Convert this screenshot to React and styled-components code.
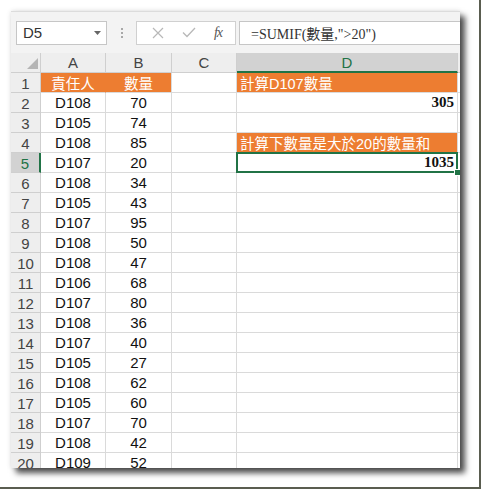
import React from 'react';
import styled, { createGlobalStyle } from 'styled-components';

const GlobalStyle = createGlobalStyle`
	body {
		margin: 0;
		background: #ffffff;
		font-family: 'Liberation Sans', 'Noto Sans CJK TC', sans-serif;
	}
`;

const green = '#217346';
const orange = '#ed7d31';
const grid = '#dadada';

const Frame = styled.div`
	box-sizing: border-box;
	width: 481px;
	height: 489px;
	padding: 11px 0 0 11px;
	border-right: 2px solid #5a5d50;
	border-bottom: 2px solid #5a5d50;
	background: #ffffff;
`;

const Window = styled.div`
	width: 449px;
	height: 457px;
	overflow: hidden;
	background: #ffffff;
	box-shadow: 5px 5px 6px rgba(0, 0, 0, 0.7), 0 0 5px rgba(0, 0, 0, 0.12);
`;

const FormulaBar = styled.div`
	box-sizing: border-box;
	height: 42px;
	display: flex;
	align-items: center;
	padding-left: 5px;
	background: #f3f3f3;
	border-top: 1px solid #dcdcdc;
`;

const NameBox = styled.div`
	box-sizing: border-box;
	width: 91px;
	height: 24px;
	display: flex;
	align-items: center;
	justify-content: space-between;
	padding: 0 5px 0 6px;
	background: #ffffff;
	border: 1px solid #c6c6c6;
	font-size: 15px;
	color: #333333;
`;

const Dots = styled.div`
	width: 29px;
	display: flex;
	flex-direction: column;
	align-items: center;
	gap: 2px;

	span {
		width: 2px;
		height: 2px;
		background: #a8a8a8;
	}
`;

const ButtonBox = styled.div`
	box-sizing: border-box;
	width: 100px;
	height: 24px;
	display: flex;
	align-items: center;
	justify-content: space-around;
	padding: 0 4px 0 6px;
	background: #ffffff;
	border: 1px solid #d0d0d0;
`;

const Fx = styled.span`
	font-family: 'Liberation Serif', serif;
	font-style: italic;
	font-size: 14px;
	color: #555555;
	letter-spacing: -1px;
`;

const FormulaInput = styled.div`
	box-sizing: border-box;
	flex: 1;
	height: 24px;
	margin-left: 3px;
	margin-right: -2px;
	display: flex;
	align-items: center;
	padding-left: 11px;
	background: #ffffff;
	border: 1px solid #c6c6c6;
	font-family: 'Liberation Serif', 'Noto Sans CJK TC', serif;
	font-size: 14px;
	color: #333333;
`;

const Sheet = styled.div`
	display: grid;
	grid-template-columns: 30px 65px 66px 65px 221px 1fr;
	grid-auto-rows: 20px;
`;

const Head = styled.div`
	box-sizing: border-box;
	display: flex;
	align-items: center;
	justify-content: center;
	background: ${(p) => (p.$active ? '#d2d2d2' : '#eeeeee')};
	color: ${(p) => (p.$active ? green : '#444444')};
	font-size: 15px;
	border-right: ${(p) => (p.$active && p.$row ? `2px solid ${green}` : '1px solid #cfcfcf')};
	border-bottom: ${(p) => (p.$active && !p.$row ? `2px solid ${green}` : '1px solid #cfcfcf')};
	padding-top: ${(p) => (p.$row ? '2px' : '0')};
`;

const Corner = styled(Head)`
	align-items: flex-end;
	justify-content: flex-end;
	padding: 0 2px 3px 0;
`;

const Cell = styled.div`
	box-sizing: border-box;
	position: relative;
	display: flex;
	align-items: center;
	justify-content: ${(p) => p.$align || 'center'};
	padding: 0 3px;
	white-space: nowrap;
	background: ${(p) => (p.$fill ? orange : '#ffffff')};
	color: ${(p) => (p.$fill ? '#ffffff' : '#111111')};
	border-right: 1px solid ${(p) => (p.$fill && p.$joined ? orange : grid)};
	border-bottom: 1px solid ${grid};
	font-family: ${(p) =>
		p.$serif ? "'Liberation Serif', serif" : "'Liberation Sans', 'Noto Sans CJK TC', sans-serif"};
	font-weight: ${(p) => (p.$serif ? 700 : 400)};
	font-size: ${(p) => (p.$cjk ? '14.5px' : '15px')};

	${(p) =>
		p.$selected &&
		`
		z-index: 2;
		&::after {
			content: '';
			position: absolute;
			inset: -1px -1px -1px -1px;
			border: 2px solid ${green};
		}
		&::before {
			content: '';
			position: absolute;
			right: -4px;
			bottom: -4px;
			width: 5px;
			height: 5px;
			background: ${green};
			border: 1px solid #ffffff;
			z-index: 3;
		}
	`}
`;

const rows = [
	['D108', 70],
	['D105', 74],
	['D108', 85],
	['D107', 20],
	['D108', 34],
	['D105', 43],
	['D107', 95],
	['D108', 50],
	['D108', 47],
	['D106', 68],
	['D107', 80],
	['D108', 36],
	['D107', 40],
	['D105', 27],
	['D108', 62],
	['D105', 60],
	['D107', 70],
	['D108', 42],
	['D109', 52],
];

const dCells = {
	2: { text: '305', align: 'flex-end', serif: true },
	4: { text: '計算下數量是大於20的數量和', fill: true, align: 'flex-start', cjk: true },
	5: { text: '1035', align: 'flex-end', serif: true, selected: true },
};

const App = () => {
	return (
		<Frame>
			<GlobalStyle />
			<Window>
				<FormulaBar>
					<NameBox>
						<span>D5</span>
						<svg width="7" height="4" viewBox="0 0 7 4">
							<path d="M0 0 L7 0 L3.5 4 Z" fill="#666666" />
						</svg>
					</NameBox>
					<Dots>
						<span />
						<span />
						<span />
					</Dots>
					<ButtonBox>
						<svg width="12" height="12" viewBox="0 0 12 12">
							<path d="M1 1 L11 11 M11 1 L1 11" stroke="#b8b8b8" strokeWidth="1.2" />
						</svg>
						<svg width="14" height="11" viewBox="0 0 14 11">
							<path d="M1 5.5 L5 9.5 L13 1" stroke="#b8b8b8" strokeWidth="1.3" fill="none" />
						</svg>
						<Fx>fx</Fx>
					</ButtonBox>
					<FormulaInput>=SUMIF(數量,"&gt;20")</FormulaInput>
				</FormulaBar>
				<Sheet>
					<Corner>
						<svg width="11" height="11" viewBox="0 0 11 11">
							<path d="M11 0 L11 11 L0 11 Z" fill="#b5b5b5" />
						</svg>
					</Corner>
					<Head>A</Head>
					<Head>B</Head>
					<Head>C</Head>
					<Head $active>D</Head>
					<Head />

					<Head $row>1</Head>
					<Cell $fill $joined $cjk>責任人</Cell>
					<Cell $fill $cjk>數量</Cell>
					<Cell />
					<Cell $fill $align="flex-start" $cjk>
						計算D107數量
					</Cell>
					<Cell />

					{rows.map(([who, qty], i) => {
						const n = i + 2;
						const d = dCells[n] || {};
						return (
							<React.Fragment key={n}>
								<Head $row $active={n === 5}>
									{n}
								</Head>
								<Cell>{who}</Cell>
								<Cell>{qty}</Cell>
								<Cell />
								<Cell
									$fill={d.fill}
									$align={d.align}
									$serif={d.serif}
									$cjk={d.cjk}
									$selected={d.selected}
								>
									{d.text}
								</Cell>
								<Cell />
							</React.Fragment>
						);
					})}
				</Sheet>
			</Window>
		</Frame>
	);
};

export default App;
